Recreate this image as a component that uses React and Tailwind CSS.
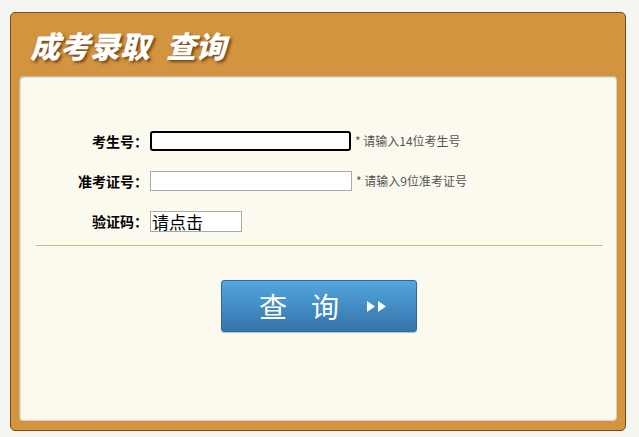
import React, { useState } from "react";

const cjk = { fontFamily: '"Noto Sans CJK SC", "Noto Sans", sans-serif' };

function Row({ label, children, hint }) {
  return (
    <div className="flex items-center h-[20px]">
      <label className="w-[131px] flex justify-end text-[14px] font-bold text-black leading-none">
        <span>{label}</span>
        <span className="inline-block w-[16px] text-left">：</span>
      </label>
      {children}
      {hint && (
        <span className="ml-[4px] text-[12px] text-[#555] leading-none">{hint}</span>
      )}
    </div>
  );
}

export default function App() {
  const [ksh, setKsh] = useState("");
  const [zkzh, setZkzh] = useState("");

  return (
    <div className="min-h-screen bg-[#f5f5f1] pt-[12px] pl-[10px]" style={cjk}>
      <div className="w-[616px] h-[419px] bg-[#d39440] border border-[#7c4e12] rounded-[5px] flex flex-col">
        {/* header */}
        <div className="h-[63px] pl-[19px] flex items-center">
          <h1 className="text-[30px] font-black italic text-white leading-none [text-shadow:2px_2px_3px_rgba(90,50,10,0.8)]">
            成考录取<span className="ml-[16px]">查询</span>
          </h1>
        </div>

        {/* panel */}
        <div className="flex-1 mx-[8px] mb-[9px] bg-[#fcfaee] rounded-[4px] shadow-[inset_1px_1px_2px_rgba(0,0,0,0.35),inset_-1px_-1px_1px_rgba(0,0,0,0.15)] pt-[55px]">
          <div className="flex flex-col gap-[20px]">
            <Row label="考生号" hint="* 请输入14位考生号">
              <input
                type="text"
                value={ksh}
                onChange={(e) => setKsh(e.target.value)}
                className="w-[201px] h-[20px] border-2 border-black rounded-[3px] bg-white outline-none px-1 text-[12px]"
              />
            </Row>
            <Row label="准考证号" hint="* 请输入9位准考证号">
              <input
                type="text"
                value={zkzh}
                onChange={(e) => setZkzh(e.target.value)}
                className="w-[202px] h-[20px] border border-[#a9a9a9] bg-white outline-none px-1 text-[12px]"
              />
            </Row>
            <Row label="验证码">
              <div className="w-[92px] h-[21px] border border-[#a9a9a9] bg-white text-[17px] leading-[19px] text-black pl-[1px] cursor-pointer">
                请点击
              </div>
            </Row>
          </div>

          <div className="mt-[14px] ml-[17px] mr-[14px] h-px bg-[#c9bc78]" />

          <button className="mt-[34px] ml-[202px] w-[196px] h-[52px] rounded-[3px] border border-[#2e6a9c] bg-gradient-to-b from-[#52a6de] to-[#3674ab] shadow-[0_1px_1px_rgba(0,0,0,0.25)] flex items-center text-white cursor-pointer">
            <span className="ml-[37px] text-[28px] leading-none">查</span>
            <span className="ml-[24px] text-[28px] leading-none">询</span>
            <svg className="ml-[27px]" width="22" height="13" viewBox="0 0 22 13">
              <path d="M1 1 L9 6.5 L1 12 Z" fill="white" />
              <path d="M12 1 L20 6.5 L12 12 Z" fill="white" />
            </svg>
          </button>
        </div>
      </div>
    </div>
  );
}
